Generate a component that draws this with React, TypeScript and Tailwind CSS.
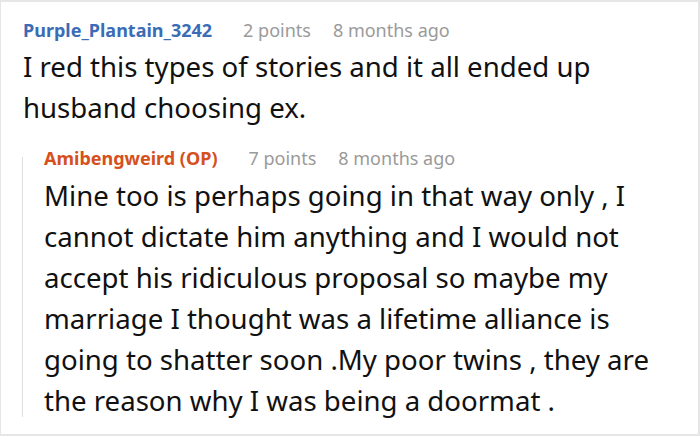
const font = { fontFamily: '"Noto Sans", "Open Sans", sans-serif' };

function Meta({ name, op, points }: { name: string; op?: boolean; points: string }) {
  return (
    <div className="flex items-baseline text-[18px] leading-[27px]">
      <span className={`font-bold ${op ? 'text-[#d5501c]' : 'text-[#3a6db5]'}`}>{name}</span>
      <span className="text-[#9a9a9a] ml-[31px]">{points}</span>
      <span className="text-[#9a9a9a] ml-[22px]">8 months ago</span>
    </div>
  );
}

export default function App() {
  return (
    <div
      style={font}
      className="w-[700px] h-[436px] bg-white border-t-2 border-r-2 border-b-2 border-l border-[#e6e6e6] pl-[22px] pr-2 pt-[14.5px] overflow-hidden"
    >
      <Meta name="Purple_Plantain_3242" points="2 points" />
      <p className="mt-[2.3px] text-[27.6px] leading-[41px] text-[#111] whitespace-nowrap">
        I red this types of stories and it all ended up
        <br />
        husband choosing ex.
      </p>
      <div className="flex mt-[17.7px] ml-[-1px]">
        <div className="w-px bg-[#dedede] mt-[11.5px] mb-[3.8px] shrink-0" />
        <div className="pl-[21px]">
          <Meta name="Amibengweird (OP)" op points="7 points" />
          <p className="mt-[2.3px] text-[27.6px] leading-[41px] text-[#111] whitespace-nowrap">
            Mine too is perhaps going in that way only , I
            <br />
            cannot dictate him anything and I would not
            <br />
            accept his ridiculous proposal so maybe my
            <br />
            marriage I thought was a lifetime alliance is
            <br />
            going to shatter soon .My poor twins , they are
            <br />
            the reason why I was being a doormat .
          </p>
        </div>
      </div>
    </div>
  );
}
